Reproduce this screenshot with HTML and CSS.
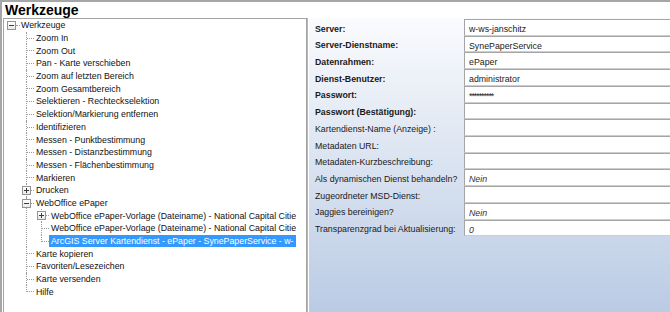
FILE: index.html
```html
<!DOCTYPE html>
<html lang="de">
<head>
    <meta charset="UTF-8">
    <title>Werkzeuge</title>
    <link rel="stylesheet" href="styles.css">
</head>
<body>
    <div class="window">
        <div class="title">Werkzeuge</div>

        <div class="content">
            <div class="tree">
                <div class="tree-clip">
                    <ul class="root">
                        <li>
                            <div class="row"><span class="exp minus"></span><span class="label">Werkzeuge</span></div>
                            <ul class="level1">
                                <li><div class="row"><span class="label">Zoom In</span></div></li>
                                <li><div class="row"><span class="label">Zoom Out</span></div></li>
                                <li><div class="row"><span class="label">Pan - Karte verschieben</span></div></li>
                                <li><div class="row"><span class="label">Zoom auf letzten Bereich</span></div></li>
                                <li><div class="row"><span class="label">Zoom Gesamtbereich</span></div></li>
                                <li><div class="row"><span class="label">Selektieren - Rechteckselektion</span></div></li>
                                <li><div class="row"><span class="label">Selektion/Markierung entfernen</span></div></li>
                                <li><div class="row"><span class="label">Identifizieren</span></div></li>
                                <li><div class="row"><span class="label">Messen - Punktbestimmung</span></div></li>
                                <li><div class="row"><span class="label">Messen - Distanzbestimmung</span></div></li>
                                <li><div class="row"><span class="label">Messen - Flächenbestimmung</span></div></li>
                                <li><div class="row"><span class="label">Markieren</span></div></li>
                                <li><div class="row"><span class="exp plus"></span><span class="label">Drucken</span></div></li>
                                <li>
                                    <div class="row"><span class="exp minus"></span><span class="label">WebOffice ePaper</span></div>
                                    <ul class="level2">
                                        <li><div class="row"><span class="exp plus"></span><span class="label">WebOffice ePaper-Vorlage (Dateiname) - National Capital Citie</span></div></li>
                                        <li><div class="row"><span class="label">WebOffice ePaper-Vorlage (Dateiname) - National Capital Citie</span></div></li>
                                        <li><div class="row"><span class="label sel">ArcGIS Server Kartendienst - ePaper - SynePaperService - w-</span></div></li>
                                    </ul>
                                </li>
                                <li><div class="row"><span class="label">Karte kopieren</span></div></li>
                                <li><div class="row"><span class="label">Favoriten/Lesezeichen</span></div></li>
                                <li><div class="row"><span class="label">Karte versenden</span></div></li>
                                <li><div class="row"><span class="label">Hilfe</span></div></li>
                            </ul>
                        </li>
                    </ul>
                </div>
            </div>

            <div class="props">
                <div class="grid">
                    <div class="key strong">Server:</div>
                    <div class="val">w-ws-janschitz</div>

                    <div class="key strong">Server-Dienstname:</div>
                    <div class="val">SynePaperService</div>

                    <div class="key strong">Datenrahmen:</div>
                    <div class="val">ePaper</div>

                    <div class="key strong">Dienst-Benutzer:</div>
                    <div class="val">administrator</div>

                    <div class="key strong">Passwort:</div>
                    <div class="val secret">**********</div>

                    <div class="key strong">Passwort (Bestätigung):</div>
                    <div class="val"></div>

                    <div class="key">Kartendienst-Name (Anzeige) :</div>
                    <div class="val"></div>

                    <div class="key">Metadaten URL:</div>
                    <div class="val"></div>

                    <div class="key">Metadaten-Kurzbeschreibung:</div>
                    <div class="val"></div>

                    <div class="key">Als dynamischen Dienst behandeln?</div>
                    <div class="val choice">Nein</div>

                    <div class="key">Zugeordneter MSD-Dienst:</div>
                    <div class="val"></div>

                    <div class="key">Jaggies bereinigen?</div>
                    <div class="val choice">Nein</div>

                    <div class="key">Transparenzgrad bei Aktualisierung:</div>
                    <div class="val choice">0</div>
                </div>
            </div>
        </div>
    </div>
</body>
</html>
```

FILE: styles.css
```css
* {
    box-sizing: border-box;
}

body {
    margin: 0;
    font-family: "Liberation Sans", Arial, sans-serif;
    font-size: 8.8px;
    color: #141414;
    background-color: #fff;
}

.window {
    width: 670px;
    height: 312px;
    border-top: 2px solid #a6a6a6;
    border-left: 2px solid #a6a6a6;
    display: flex;
    flex-direction: column;
    overflow: hidden;
}

.title {
    height: 16px;
    padding-left: 3px;
    font-size: 14px;
    font-weight: bold;
    line-height: 16px;
    color: #000;
}

.content {
    flex: 1;
    display: flex;
    min-height: 0;
}

/* tree view */

.tree {
    width: 304px;
    margin-left: 1px;
    border: 1px solid #a3a3a3;
    border-bottom: none;
    background-color: #fff;
    overflow: hidden;
}

.tree-clip {
    width: 298px;
    overflow: hidden;
    white-space: nowrap;
}

.tree ul {
    list-style: none;
    margin: 0;
    padding: 0;
}

.root {
    margin-left: 1px !important;
}

.level1 {
    padding-left: 15px !important;
}

.level2 {
    padding-left: 15px !important;
}

.tree li {
    position: relative;
}

.row {
    position: relative;
    height: 12.7px;
    padding-left: 14px;
    display: flex;
    align-items: center;
}

.label {
    display: inline-block;
    height: 12px;
    line-height: 12px;
    padding: 0 2px;
    color: #111;
}

.label.sel {
    background-color: #3399ff;
    color: #fff;
}

/* dotted connector lines */

.level1 > li::before,
.level2 > li::before {
    content: '';
    position: absolute;
    left: 6px;
    top: 0;
    bottom: 0;
    border-left: 1px dotted #9a9a9a;
}

.level1 > li:last-child::before,
.level2 > li:last-child::before {
    bottom: auto;
    height: 7px;
}

.level1 > li > .row::before,
.level2 > li > .row::before {
    content: '';
    position: absolute;
    left: 7px;
    top: 6px;
    width: 7px;
    border-top: 1px dotted #9a9a9a;
}

.root > li > .row::before {
    content: '';
    position: absolute;
    left: 11px;
    top: 6px;
    width: 4px;
    border-top: 1px dotted #9a9a9a;
}

/* expand / collapse boxes */

.exp {
    position: absolute;
    left: 2px;
    top: 2px;
    width: 9px;
    height: 9px;
    border: 1px solid #939393;
    background: linear-gradient(#fff, #e9e9e9);
    z-index: 1;
}

.exp::after {
    content: '';
    position: absolute;
    left: 1px;
    top: 3px;
    width: 5px;
    height: 1px;
    background-color: #3c3c3c;
}

.exp.plus::before {
    content: '';
    position: absolute;
    left: 3px;
    top: 1px;
    width: 1px;
    height: 5px;
    background-color: #3c3c3c;
}

/* property panel */

.props {
    flex: 1;
    border-left: 1px solid #b6b6b6;
    box-shadow: inset 1px 0 0 #fff;
    background: linear-gradient(#fafbfd, #bacbe4);
    padding: 1px 0 0 7px;
    overflow: hidden;
}

.grid {
    display: grid;
    grid-template-columns: 149px 230px;
    grid-auto-rows: 16.73px;
}

.key {
    line-height: 16.73px;
    padding-top: 1.5px;
    white-space: nowrap;
    color: #1a1a1a;
}

.key.strong {
    font-weight: bold;
}

.val {
    background-color: #fff;
    border: 1px solid #a5a5a5;
    border-bottom-color: #cdcdcd;
    border-right: none;
    padding: 3px 4px 0;
    line-height: 12px;
    white-space: nowrap;
    overflow: hidden;
    color: #1a1a1a;
}

.val.secret {
    letter-spacing: -1px;
}

.val.choice {
    font-style: italic;
    color: #333;
}
```
